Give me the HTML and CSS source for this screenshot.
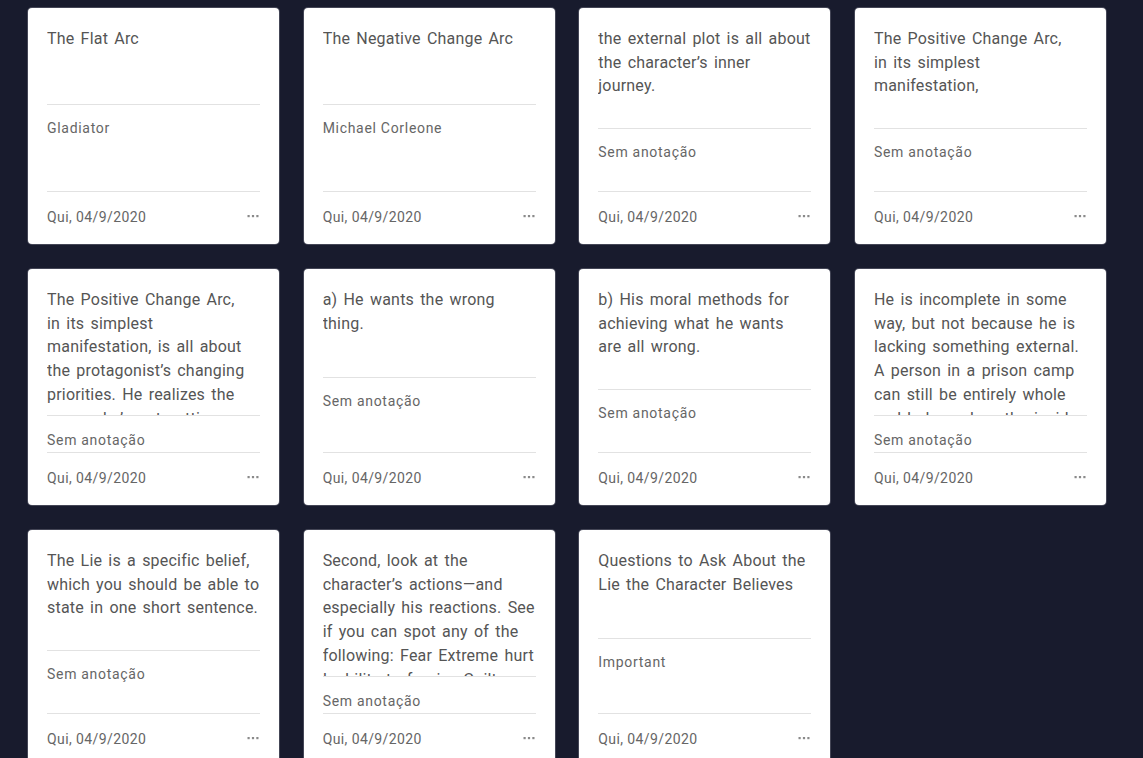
FILE: index.html
```html
<!DOCTYPE html>
<html lang="pt">
<head>
<meta charset="utf-8">
<title>Anotações</title>
<link rel="stylesheet" href="styles.css">
</head>
<body>
<main class="grid">
  <article class="card">
    <div class="content">
      <div class="title">The Flat Arc</div>
      <div class="note">Gladiator</div>
    </div>
    <footer class="foot"><span class="date">Qui, 04/9/2020</span><svg class="more" width="12" height="4" viewBox="0 0 12 4"><rect x="0.5" y="1" width="2.2" height="2.2"/><rect x="4.9" y="1" width="2.2" height="2.2"/><rect x="9.3" y="1" width="2.2" height="2.2"/></svg></footer>
  </article>
  <article class="card">
    <div class="content">
      <div class="title">The Negative Change Arc</div>
      <div class="note">Michael Corleone</div>
    </div>
    <footer class="foot"><span class="date">Qui, 04/9/2020</span><svg class="more" width="12" height="4" viewBox="0 0 12 4"><rect x="0.5" y="1" width="2.2" height="2.2"/><rect x="4.9" y="1" width="2.2" height="2.2"/><rect x="9.3" y="1" width="2.2" height="2.2"/></svg></footer>
  </article>
  <article class="card">
    <div class="content">
      <div class="title">the external plot is all about the character’s inner journey.</div>
      <div class="note">Sem anotação</div>
    </div>
    <footer class="foot"><span class="date">Qui, 04/9/2020</span><svg class="more" width="12" height="4" viewBox="0 0 12 4"><rect x="0.5" y="1" width="2.2" height="2.2"/><rect x="4.9" y="1" width="2.2" height="2.2"/><rect x="9.3" y="1" width="2.2" height="2.2"/></svg></footer>
  </article>
  <article class="card">
    <div class="content">
      <div class="title">The Positive Change Arc,<br>in its simplest manifestation,</div>
      <div class="note">Sem anotação</div>
    </div>
    <footer class="foot"><span class="date">Qui, 04/9/2020</span><svg class="more" width="12" height="4" viewBox="0 0 12 4"><rect x="0.5" y="1" width="2.2" height="2.2"/><rect x="4.9" y="1" width="2.2" height="2.2"/><rect x="9.3" y="1" width="2.2" height="2.2"/></svg></footer>
  </article>

  <article class="card">
    <div class="content">
      <div class="title">The Positive Change Arc,<br>in its simplest manifestation, is all about the protagonist’s changing priorities. He realizes the reason he’s not getting what he wants is because he has been chasing the wrong thing.</div>
      <div class="note">Sem anotação</div>
    </div>
    <footer class="foot"><span class="date">Qui, 04/9/2020</span><svg class="more" width="12" height="4" viewBox="0 0 12 4"><rect x="0.5" y="1" width="2.2" height="2.2"/><rect x="4.9" y="1" width="2.2" height="2.2"/><rect x="9.3" y="1" width="2.2" height="2.2"/></svg></footer>
  </article>
  <article class="card">
    <div class="content">
      <div class="title">a) He wants the wrong thing.</div>
      <div class="note">Sem anotação</div>
    </div>
    <footer class="foot"><span class="date">Qui, 04/9/2020</span><svg class="more" width="12" height="4" viewBox="0 0 12 4"><rect x="0.5" y="1" width="2.2" height="2.2"/><rect x="4.9" y="1" width="2.2" height="2.2"/><rect x="9.3" y="1" width="2.2" height="2.2"/></svg></footer>
  </article>
  <article class="card">
    <div class="content">
      <div class="title">b) His moral methods for achieving what he wants are all wrong.</div>
      <div class="note">Sem anotação</div>
    </div>
    <footer class="foot"><span class="date">Qui, 04/9/2020</span><svg class="more" width="12" height="4" viewBox="0 0 12 4"><rect x="0.5" y="1" width="2.2" height="2.2"/><rect x="4.9" y="1" width="2.2" height="2.2"/><rect x="9.3" y="1" width="2.2" height="2.2"/></svg></footer>
  </article>
  <article class="card">
    <div class="content">
      <div class="title">He is incomplete in some way, but not because he is lacking something external. A person in a prison camp can still be entirely whole and balanced on the inside.</div>
      <div class="note">Sem anotação</div>
    </div>
    <footer class="foot"><span class="date">Qui, 04/9/2020</span><svg class="more" width="12" height="4" viewBox="0 0 12 4"><rect x="0.5" y="1" width="2.2" height="2.2"/><rect x="4.9" y="1" width="2.2" height="2.2"/><rect x="9.3" y="1" width="2.2" height="2.2"/></svg></footer>
  </article>

  <article class="card">
    <div class="content">
      <div class="title">The Lie is a specific belief, which you should be able to state in one short sentence.</div>
      <div class="note">Sem anotação</div>
    </div>
    <footer class="foot"><span class="date">Qui, 04/9/2020</span><svg class="more" width="12" height="4" viewBox="0 0 12 4"><rect x="0.5" y="1" width="2.2" height="2.2"/><rect x="4.9" y="1" width="2.2" height="2.2"/><rect x="9.3" y="1" width="2.2" height="2.2"/></svg></footer>
  </article>
  <article class="card">
    <div class="content">
      <div class="title">Second, look at the character’s actions—and especially his reactions. See if you can spot any of the following: Fear Extreme hurt Inability to forgive Guilt Secret shame</div>
      <div class="note">Sem anotação</div>
    </div>
    <footer class="foot"><span class="date">Qui, 04/9/2020</span><svg class="more" width="12" height="4" viewBox="0 0 12 4"><rect x="0.5" y="1" width="2.2" height="2.2"/><rect x="4.9" y="1" width="2.2" height="2.2"/><rect x="9.3" y="1" width="2.2" height="2.2"/></svg></footer>
  </article>
  <article class="card">
    <div class="content">
      <div class="title">Questions to Ask About the Lie the Character Believes</div>
      <div class="note">Important</div>
    </div>
    <footer class="foot"><span class="date">Qui, 04/9/2020</span><svg class="more" width="12" height="4" viewBox="0 0 12 4"><rect x="0.5" y="1" width="2.2" height="2.2"/><rect x="4.9" y="1" width="2.2" height="2.2"/><rect x="9.3" y="1" width="2.2" height="2.2"/></svg></footer>
  </article>
</main>
</body>
</html>
```

FILE: styles.css
```css
html, body {
  margin: 0;
  padding: 0;
  background: #181b2d;
}

body {
  font-family: Roboto, "Open Sans", sans-serif;
  color: #555;
}

.grid {
  width: 1078px;
  box-sizing: border-box;
  margin-left: 28px;
  padding-top: 8px;
  display: grid;
  grid-template-columns: repeat(4, 1fr);
  column-gap: 24.67px;
  row-gap: 25px;
}

.card {
  height: 236px;
  box-sizing: border-box;
  padding: 19px 19px 17px 19px;
  background: #fff;
  border-radius: 4px;
  display: flex;
  flex-direction: column;
  box-shadow: 0 0 0 1px rgba(200, 200, 210, 0.25);
}

.content {
  flex: 1 1 auto;
  min-height: 0;
  display: flex;
  flex-direction: column;
}

.title {
  flex: 1 1 auto;
  min-height: 0;
  overflow: hidden;
  padding-bottom: 3px;
  border-bottom: 1px solid #e2e2e2;
  font-size: 16px;
  line-height: 23.7px;
  letter-spacing: 0.2px;
  word-spacing: 2px;
  color: #555;
}

.note {
  flex: 1 1 auto;
  padding: 13.5px 0 2.5px;
  font-size: 14px;
  line-height: 20px;
  letter-spacing: 0.7px;
  color: #666;
  border-bottom: 1px solid #e2e2e2;
}

.foot {
  flex: 0 0 35px;
  box-sizing: border-box;
  padding-top: 15px;
  display: flex;
  align-items: center;
  justify-content: space-between;
}

.date {
  font-size: 14px;
  line-height: 20px;
  letter-spacing: 0.4px;
  color: #666;
}

.more {
  fill: #8a8a8a;
  margin-right: 1px;
  margin-top: -2px;
}
```
